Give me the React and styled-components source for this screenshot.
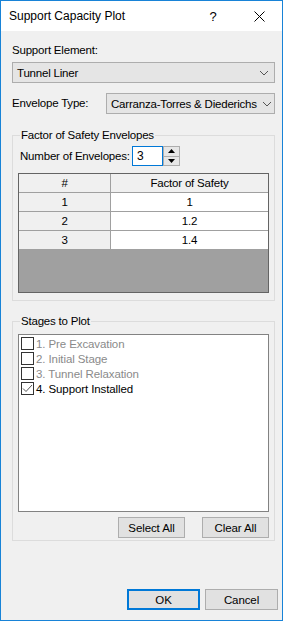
import React from "react";
import styled, { createGlobalStyle } from "styled-components";

const GlobalStyle = createGlobalStyle`
  html, body { margin: 0; padding: 0; background: #ffffff; }
  body { font-family: "Liberation Sans", Arial, sans-serif; font-size: 11.5px; color: #000; }
  * { box-sizing: border-box; }
`;

const Window = styled.div`
  width: 283px;
  height: 621px;
  border: 1px solid #1883d7;
  background: #f0f0f0;
  display: flex;
  flex-direction: column;
`;

const TitleBar = styled.div`
  height: 30px;
  flex: none;
  background: #ffffff;
  display: flex;
  align-items: center;
  padding-left: 8px;
`;

const Title = styled.div`
  flex: 1;
  font-size: 12px;
  color: #000;
`;

const CaptionButton = styled.div`
  width: 46px;
  height: 30px;
  display: flex;
  align-items: center;
  justify-content: center;
  font-size: 13px;
  color: #000;
`;

const Body = styled.div`
  flex: 1;
  display: flex;
  flex-direction: column;
  padding: 12px 0 0 11px;
`;

const Label = styled.div`
  height: 15px;
  line-height: 15px;
  white-space: nowrap;
  letter-spacing: -0.2px;
`;

const Select = styled.div`
  width: ${(p) => p.$w}px;
  height: 21px;
  flex: none;
  border: 1px solid #adadad;
  background: #e5e5e5;
  display: flex;
  align-items: center;
  padding: 0 0 0 4px;
  margin-top: ${(p) => p.$mt || 0}px;
  white-space: nowrap;
  overflow: hidden;
`;

const SelectText = styled.div`
  flex: 1;
  letter-spacing: -0.2px;
`;

const Chevron = styled.svg`
  width: 20px;
  height: 19px;
  flex: none;
`;

const Row = styled.div`
  display: flex;
  align-items: center;
  margin-top: ${(p) => p.$mt || 0}px;
`;

const RowLabel = styled(Label)`
  width: ${(p) => p.$w}px;
  flex: none;
  padding-left: ${(p) => p.$pl || 0}px;
`;

const GroupBox = styled.div`
  position: relative;
  width: 263px;
  border: 1px solid #dcdcdc;
  margin-top: ${(p) => p.$mt}px;
  padding: ${(p) => p.$pad};
  display: flex;
  flex-direction: column;
`;

const Legend = styled.div`
  position: absolute;
  top: -8px;
  left: 7px;
  padding: 0 1px;
  background: #f0f0f0;
  line-height: 15px;
  letter-spacing: -0.2px;
`;

const NumInput = styled.div`
  width: 31px;
  height: 20px;
  border: 1px solid #0078d7;
  background: #fff;
  padding-left: 4px;
  line-height: 18px;
  font-size: 12px;
`;

const Spinner = styled.div`
  width: 17px;
  height: 20px;
  border: 1px solid #adadad;
  background: #e6e6e6;
  display: flex;
  flex-direction: column;
`;

const SpinHalf = styled.div`
  flex: 1;
  display: flex;
  align-items: center;
  justify-content: center;
  border-top: ${(p) => (p.$lower ? "1px solid #adadad" : "none")};
`;

const Table = styled.div`
  width: 251px;
  height: 120px;
  margin-top: 7px;
  border: 1px solid #646464;
  background: #a0a0a0;
  display: flex;
  flex-direction: column;
`;

const TRow = styled.div`
  display: grid;
  grid-template-columns: 92px 1fr;
  height: 19px;
  border-bottom: 1px solid #a0a0a0;
`;

const Cell = styled.div`
  background: ${(p) => (p.$white ? "#ffffff" : "#f0f0f0")};
  border-right: ${(p) => (p.$first ? "1px solid #a0a0a0" : "none")};
  text-align: center;
  line-height: 18px;
  letter-spacing: -0.2px;
`;

const ListBox = styled.div`
  width: 251px;
  height: 178px;
  border: 1px solid #828282;
  background: #fff;
  padding: 1px 0 0 2px;
  display: flex;
  flex-direction: column;
`;

const Item = styled.div`
  height: 15px;
  display: flex;
  align-items: center;
  gap: 2px;
  color: ${(p) => (p.$disabled ? "#8a8a8a" : "#000")};
  letter-spacing: -0.1px;
  white-space: nowrap;
`;

const Check = styled.div`
  width: 13px;
  height: 13px;
  border: 1px solid #333333;
  background: #fff;
  display: flex;
  align-items: center;
  justify-content: center;
`;

const ButtonRow = styled.div`
  display: flex;
  justify-content: flex-end;
  gap: ${(p) => p.$gap}px;
  margin-top: ${(p) => p.$mt}px;
  padding-right: ${(p) => p.$pr}px;
`;

const Button = styled.div`
  width: ${(p) => p.$w}px;
  height: 21px;
  border: ${(p) => (p.$default ? "2px solid #0078d7" : "1px solid #adadad")};
  background: #e1e1e1;
  display: flex;
  align-items: center;
  justify-content: center;
  letter-spacing: -0.1px;
`;

const Footer = styled.div`
  margin-top: auto;
  padding: 0 4px 10px 0;
  display: flex;
  justify-content: flex-end;
  gap: 5px;
`;

const ChevronIcon = () => (
  <Chevron viewBox="0 0 20 19">
    <path d="M6 8 L10 12 L14 8" fill="none" stroke="#555" strokeWidth="1" />
  </Chevron>
);

const items = [
  { label: "1. Pre Excavation", disabled: true, checked: false },
  { label: "2. Initial Stage", disabled: true, checked: false },
  { label: "3. Tunnel Relaxation", disabled: true, checked: false },
  { label: "4. Support Installed", disabled: false, checked: true },
];

const rows = [
  ["1", "1"],
  ["2", "1.2"],
  ["3", "1.4"],
];

export default function App() {
  return (
    <>
      <GlobalStyle />
      <Window>
        <TitleBar>
          <Title>Support Capacity Plot</Title>
          <CaptionButton>?</CaptionButton>
          <CaptionButton>
            <svg width="11" height="11" viewBox="0 0 11 11">
              <path d="M0.5 0.5 L10.5 10.5 M10.5 0.5 L0.5 10.5" stroke="#000" strokeWidth="1" />
            </svg>
          </CaptionButton>
        </TitleBar>
        <Body>
          <Label>Support Element:</Label>
          <Select $w={263} $mt={4}>
            <SelectText>Tunnel Liner</SelectText>
            <ChevronIcon />
          </Select>
          <Row $mt={10}>
            <RowLabel $w={94}>Envelope Type:</RowLabel>
            <Select $w={169}>
              <SelectText>Carranza-Torres &amp; Diederichs</SelectText>
              <ChevronIcon />
            </Select>
          </Row>
          <GroupBox $mt={21} $pad="10px 0 7px 5px">
            <Legend>Factor of Safety Envelopes</Legend>
            <Row>
              <RowLabel $w={114} $pl={2}>Number of Envelopes:</RowLabel>
              <NumInput>3</NumInput>
              <Spinner>
                <SpinHalf>
                  <svg width="7" height="4" viewBox="0 0 7 4"><path d="M3.5 0 L7 4 L0 4 Z" fill="#000" /></svg>
                </SpinHalf>
                <SpinHalf $lower>
                  <svg width="7" height="4" viewBox="0 0 7 4"><path d="M0 0 L7 0 L3.5 4 Z" fill="#000" /></svg>
                </SpinHalf>
              </Spinner>
            </Row>
            <Table>
              <TRow>
                <Cell $first>#</Cell>
                <Cell>Factor of Safety</Cell>
              </TRow>
              {rows.map(([n, v]) => (
                <TRow key={n}>
                  <Cell $first>{n}</Cell>
                  <Cell $white>{v}</Cell>
                </TRow>
              ))}
            </Table>
          </GroupBox>
          <GroupBox $mt={20} $pad="12px 0 2px 5px">
            <Legend>Stages to Plot</Legend>
            <ListBox>
              {items.map((it) => (
                <Item key={it.label} $disabled={it.disabled}>
                  <Check>
                    {it.checked && (
                      <svg width="11" height="11" viewBox="0 0 11 11">
                        <path d="M1 5.5 L4 8.5 L10 2" fill="none" stroke="#555" strokeWidth="1" />
                      </svg>
                    )}
                  </Check>
                  {it.label}
                </Item>
              ))}
            </ListBox>
            <ButtonRow $gap={17} $mt={5} $pr={5}>
              <Button $w={67}>Select All</Button>
              <Button $w={67}>Clear All</Button>
            </ButtonRow>
          </GroupBox>
          <Footer>
            <Button $w={73} $default>OK</Button>
            <Button $w={73}>Cancel</Button>
          </Footer>
        </Body>
      </Window>
    </>
  );
}
